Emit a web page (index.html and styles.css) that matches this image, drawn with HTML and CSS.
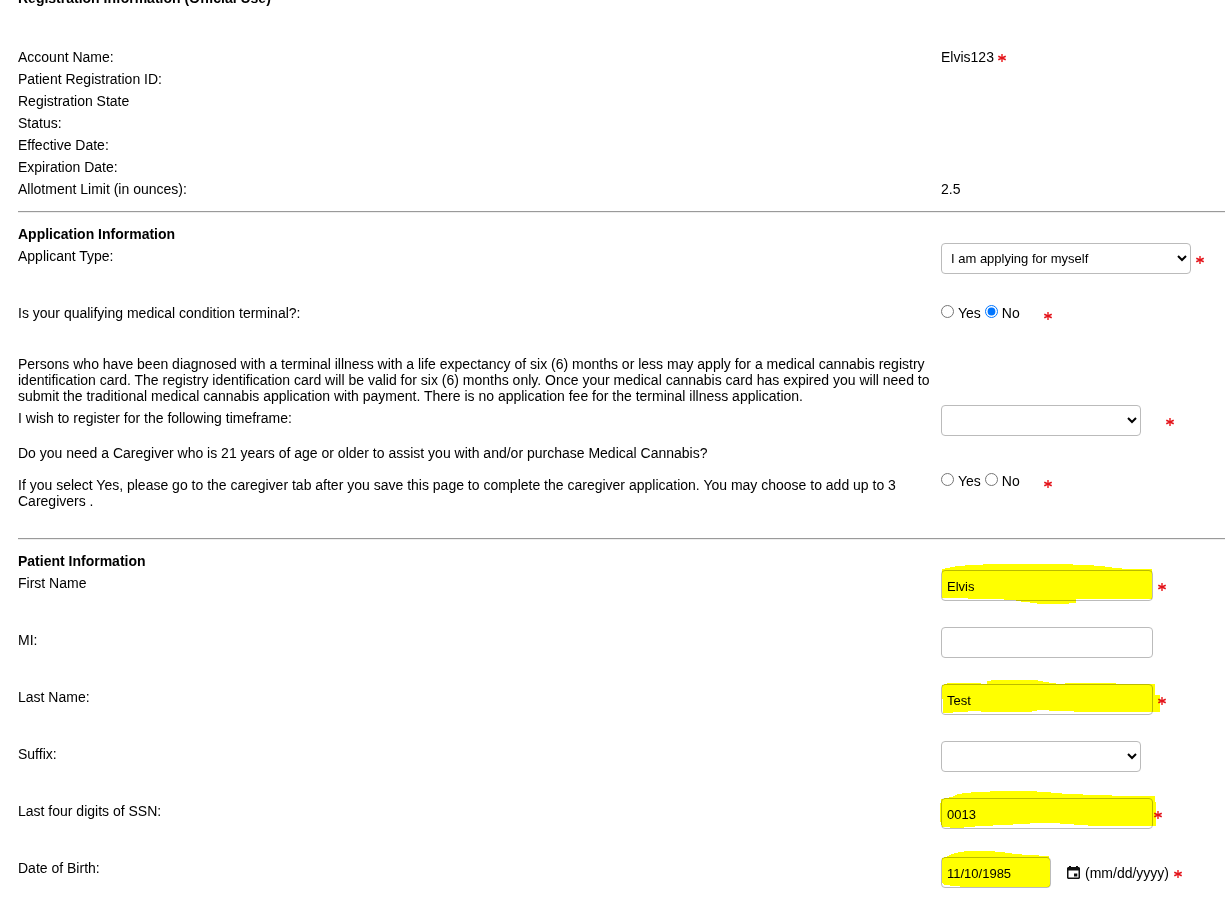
FILE: index.html
```html
<!DOCTYPE html>
<html lang="en">
<head>
    <meta charset="UTF-8">
    <meta name="viewport" content="width=device-width, initial-scale=1.0">
    <title>Patient Registration</title>
    <link rel="stylesheet" href="styles.css">
</head>
<body>
    <svg class="sprite" aria-hidden="true">
        <symbol id="star" viewBox="0 0 8 8">
            <path d="M4 0v8" stroke="#f04a4a" stroke-width="1.8" fill="none"/>
            <path d="M0.300 2.200l7.400 3.600M0.300 5.800l7.400-3.600" stroke="#e3141c" stroke-width="1.700" fill="none"/>
        </symbol>
    </svg>
    <form class="registration">
        <section class="official">
            <h2>Registration Information (Official Use)</h2>
            <div class="info-row">
                <span>Account Name:</span>
                <span class="value">Elvis123 <svg class="required"><use href="#star"/></svg></span>
            </div>
            <div class="info-row"><span>Patient Registration ID:</span></div>
            <div class="info-row"><span>Registration State</span></div>
            <div class="info-row"><span>Status:</span></div>
            <div class="info-row"><span>Effective Date:</span></div>
            <div class="info-row"><span>Expiration Date:</span></div>
            <div class="info-row">
                <span>Allotment Limit (in ounces):</span>
                <span class="value">2.5</span>
            </div>
        </section>
        <hr>
        <section>
            <h2>Application Information</h2>
            <div class="field">
                <label for="applicant-type">Applicant Type:</label>
                <div class="control">
                    <select id="applicant-type" class="wide">
                        <option>I am applying for myself</option>
                    </select>
                    <svg class="required"><use href="#star"/></svg>
                </div>
            </div>
            <div class="field terminal">
                <span class="label" id="terminal-label">Is your qualifying medical condition terminal?:</span>
                <div class="control spaced">
                    <div class="radios" role="radiogroup" aria-labelledby="terminal-label">
                        <input type="radio" name="terminal" id="terminal-yes"><label for="terminal-yes">Yes</label>
                        <input type="radio" name="terminal" id="terminal-no" checked><label for="terminal-no">No</label>
                    </div>
                    <svg class="required"><use href="#star"/></svg>
                </div>
            </div>
            <div class="note">
                <p>Persons who have been diagnosed with a terminal illness with a life expectancy of six (6) months or less may apply for a medical cannabis registry identification card. The registry identification card will be valid for six (6) months only. Once your medical cannabis card has expired you will need to submit the traditional medical cannabis application with payment. There is no application fee for the terminal illness application.</p>
            </div>
            <div class="field timeframe">
                <label for="timeframe">I wish to register for the following timeframe:</label>
                <div class="control spaced">
                    <select id="timeframe"><option></option></select>
                    <svg class="required"><use href="#star"/></svg>
                </div>
            </div>
            <div class="field caregiver">
                <div class="label" id="caregiver-label">
                    <p>Do you need a Caregiver who is 21 years of age or older to assist you with and/or purchase Medical Cannabis?</p>
                    <p>If you select Yes, please go to the caregiver tab after you save this page to complete the caregiver application. You may choose to add up to 3 Caregivers .</p>
                </div>
                <div class="control spaced">
                    <div class="radios" role="radiogroup" aria-labelledby="caregiver-label">
                        <input type="radio" name="caregiver" id="caregiver-yes"><label for="caregiver-yes">Yes</label>
                        <input type="radio" name="caregiver" id="caregiver-no"><label for="caregiver-no">No</label>
                    </div>
                    <svg class="required"><use href="#star"/></svg>
                </div>
            </div>
        </section>
        <hr>
        <section>
            <h2>Patient Information</h2>
            <div class="field">
                <label for="first-name">First Name</label>
                <div class="control">
                    <input type="text" id="first-name" value="Elvis">
                    <svg class="required"><use href="#star"/></svg>
                    <svg class="marker"><path d="M1-1L6-2L17-4L31-5L53-6H120L144-5L161-4L174-2L187-1H211V29H135V33H128V34H96V33L82 32L73 30L52 29L1 28Z"/></svg>
                </div>
            </div>
            <div class="field">
                <label for="mi">MI:</label>
                <div class="control">
                    <input type="text" id="mi">
                </div>
            </div>
            <div class="field">
                <label for="last-name">Last Name:</label>
                <div class="control">
                    <input type="text" id="last-name" value="Test">
                    <svg class="required"><use href="#star"/></svg>
                    <svg class="marker"><path d="M1 1L8-1H40V0H46V-3L54-4H95L104-2L119 0L129-1H175V0H214V11H219V28H133V27H108V26H100L91 27V28H40V27H27V28H12V29H2Z"/></svg>
                </div>
            </div>
            <div class="field">
                <label for="suffix">Suffix:</label>
                <div class="control">
                    <select id="suffix"><option></option></select>
                </div>
            </div>
            <div class="field">
                <label for="ssn">Last four digits of SSN:</label>
                <div class="control tight">
                    <input type="text" id="ssn" value="0013">
                    <svg class="required"><use href="#star"/></svg>
                    <svg class="marker"><path d="M0 1L11-1L17-4L34-6L64-7H87L104-6L127-4L157-3L184-2H214L215 9V28H153L140 27L112 25H97L64 27L39 28L17 30L1 29L-1 22V10Z"/></svg>
                </div>
            </div>
            <div class="field dob">
                <label for="dob">Date of Birth:</label>
                <div class="control">
                    <input type="text" id="dob" class="date" value="11/10/1985">
                    <button type="button" class="calendar" aria-label="Choose date">
                        <svg width="13" height="13" viewBox="0 0 13 13">
                            <path fill="#111" fill-rule="evenodd" d="M2 0h2v1h5V0h2v1h1l1 1v10l-1 1H1l-1-1V2l1-1h1zM1.500 4.500v7h10v-7z"/>
                            <path fill="#111" d="M7 7.500h3.300v3H7z"/>
                        </svg>
                    </button>
                    <span>(mm/dd/yyyy)</span>
                    <svg class="required"><use href="#star"/></svg>
                    <svg class="marker"><path d="M1 1L7-1L14-4L26-6H47L61-5L74-3L87-2L108-1V1L109 3V29L107 30H24L4 28L1 26Z"/></svg>
                </div>
            </div>
        </section>
    </form>
</body>
</html>
```
FILE: styles.css
```css
* {
    box-sizing: border-box;
}
body {
    margin: 0;
    font-family: Arial, "Liberation Sans", sans-serif;
    font-size: 14px;
    line-height: 16px;
    color: #000;
    background-color: #fff;
}
.sprite {
    display: none;
}
.registration {
    padding-left: 18px;
}
h2 {
    margin: 0 0 1px;
    font-size: 14px;
    line-height: 16px;
}
p {
    margin: 0;
}
hr {
    margin: 11px 0 13px;
    border: 0;
    border-top: 1px solid #9a9a9a;
    border-bottom: 1px solid #eee;
}
.official h2 {
    margin: -10px 0 40px;
}
.info-row, .field, .note {
    display: grid;
    grid-template-columns: minmax(0, 1fr) 284px;
}
.info-row {
    padding: 3px 0;
}
.field {
    margin-bottom: 26px;
}
.field > label, .field > .label {
    padding-top: 5px;
}
.control {
    position: relative;
    display: flex;
    align-items: center;
    gap: 5px;
    min-height: 31px;
}
.control.spaced {
    gap: 25px;
}
.control.tight {
    gap: 1px;
}
.required {
    width: 8px;
    height: 8px;
    margin-top: 2px;
    flex: none;
}
.value .required {
    margin: 0;
}
.radios + .required {
    margin: 0 0 0 -1px;
}
input[type="text"], select {
    height: 31px;
    border: 1px solid #bbb;
    border-radius: 4px;
    background-color: #fff;
    color: #000;
    font-family: inherit;
    font-size: 13px;
}
input[type="text"] {
    width: 212px;
    padding: 3px 5px 1px;
}
select {
    width: 200px;
    padding: 0 6px 0 5px;
}
select.wide {
    width: 250px;
}
.radios {
    display: flex;
    align-items: center;
    gap: 4px;
    padding-bottom: 5px;
}
.radios input {
    width: 13px;
    height: 13px;
    margin: 0 0 3px;
}
.field.terminal {
    margin-bottom: 25px;
}
.note {
    margin-bottom: 1px;
}
.field.timeframe {
    margin-bottom: 4px;
}
.field.caregiver {
    margin-bottom: 0;
}
.caregiver .label {
    padding-bottom: 18px;
}
.caregiver p + p {
    margin-top: 16px;
}
.dob .control {
    margin-top: 2px;
}
input[type="text"].date {
    width: 110px;
    margin-right: 11px;
}
.calendar {
    display: flex;
    padding: 0;
    border: 0;
    background: none;
    cursor: pointer;
}
/* hand-drawn highlighter over the filled fields */
.marker {
    position: absolute;
    top: 0;
    left: 0;
    width: 212px;
    height: 31px;
    overflow: visible;
    fill: #ff0;
    mix-blend-mode: multiply;
    pointer-events: none;
    shape-rendering: crispEdges;
}
```
